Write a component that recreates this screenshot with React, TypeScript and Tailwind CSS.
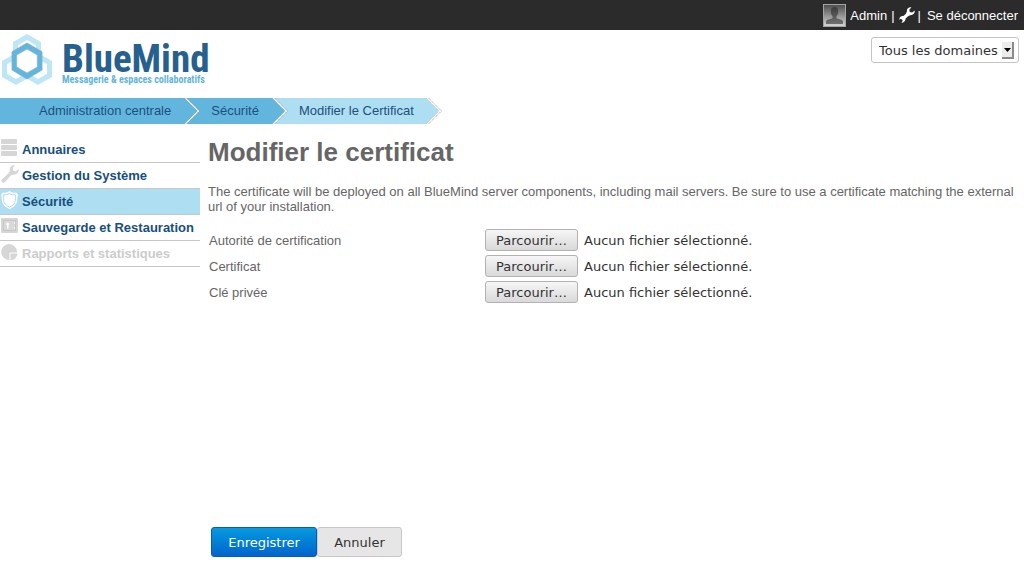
import { useRef, useState } from "react";
import type { ReactNode } from "react";

function LogoMark() {
  return (
    <svg width="52" height="53" viewBox="0 0 52 53" fill="none" aria-hidden="true">
      <g fill="#bfe6f7" fillRule="evenodd">
        <path d="M26 1 L40 9 V25 L26 33 L12 25 V9 Z M26 7 L17 12.200 V21.800 L26 27 L35 21.800 V12.200 Z" />
        <path d="M15 20 L29 28 V44 L15 52 L1 44 V28 Z M15 26 L6 31.200 V40.800 L15 46 L24 40.800 V31.200 Z" />
        <path d="M37 20 L51 28 V44 L37 52 L23 44 V28 Z M37 26 L28 31.200 V40.800 L37 46 L46 40.800 V31.200 Z" />
      </g>
      <path d="M26 10 L41 18.800 V37 L26 46 L11 37 V18.800 Z" fill="#62b6de" stroke="#7fb0c8" strokeWidth="0.800" />
      <path d="M26 16 L36.300 22 V34 L26 40 L15.700 34 V22 Z" fill="#fff" stroke="#8fb3c4" strokeWidth="0.700" />
    </svg>
  );
}

function Wrench({ size, color }: { size: number; color: string }) {
  return (
    <svg width={size} height={size} viewBox="0 0 18 18" fill={color} aria-hidden="true">
      <path d="M14 0.300 C11 -0.200 8.400 1.800 8.800 5.400 L7.500 7.800 L5 10.200 C3.500 10 1.500 10.600 0.700 12.400 L0.200 14.300 L2 13.300 L4 14.500 L3.800 16.300 L2.500 17.800 C5.300 18 7.600 15.800 7.400 13 L10.200 10.300 L12.500 9.200 C15.600 9.500 18 7.200 17.700 4 L14.800 6.300 L12.100 5.700 L11.600 3 Z" />
    </svg>
  );
}

function Avatar() {
  return (
    <svg width="23" height="23" viewBox="0 0 23 23" aria-hidden="true">
      <defs>
        <linearGradient id="avatarBg" x1="0" y1="0" x2="0" y2="1">
          <stop offset="0" stopColor="#4c4c4c" />
          <stop offset="1" stopColor="#d8d8d8" />
        </linearGradient>
        <linearGradient id="avatarFg" x1="0" y1="0" x2="0" y2="1">
          <stop offset="0" stopColor="#3c3c3c" />
          <stop offset="1" stopColor="#707070" />
        </linearGradient>
      </defs>
      <rect x="0.500" y="0.500" width="22" height="22" fill="url(#avatarBg)" stroke="#a5a5a5" />
      <path d="M11.500 3 C8.700 3 7.600 5 7.800 7.800 C8 10.200 8.900 11.800 9.600 12.500 V14 C8 15.500 3.500 15 3 17.500 V20 H20 V17.500 C19.500 15 15 15.500 13.400 14 V12.500 C14.100 11.800 15 10.200 15.200 7.800 C15.400 5 14.300 3 11.500 3 Z" fill="url(#avatarFg)" />
    </svg>
  );
}

const gray = "#d6d6d6";

const icons: Record<string, ReactNode> = {
  directory: (
    <svg width="18" height="18" viewBox="0 0 18 18" fill={gray} aria-hidden="true">
      <rect x="0" y="0" width="16" height="5" rx="1" />
      <rect x="0" y="6" width="16" height="5" rx="1" />
      <rect x="0" y="12" width="16" height="5" rx="1" />
    </svg>
  ),
  system: (
    <svg width="18" height="18" viewBox="0 0 18 18" fill={gray} aria-hidden="true">
      <path d="M14 0 C10.500 -0.300 8 2.500 9 6 L7.600 8.300 L0.900 14.500 C-0.500 16 1.500 18.800 3.600 17.200 L10.200 10.300 L12.500 9.600 C15.800 10 18.400 7 17.800 4 L15 6.300 L12.200 5.700 L11.700 3 Z" />
    </svg>
  ),
  security: (
    <svg width="18" height="18" viewBox="0 0 18 18" aria-hidden="true">
      <path d="M8.500 0 C6.500 1.700 4 2.200 1.500 1.500 L0 4 C1 6 0.500 8 1 11 C2 14.500 5 16.500 8.500 18 C12 16.500 15 14.500 16 11 C16.500 8 16 6 17 4 L15.500 1.500 C13 2.200 10.500 1.700 8.500 0 Z" fill="#fff" />
      <path d="M8.500 2.500 C6.500 3.800 4.500 4 2.700 3.700 C2.700 7 2.200 9 3.100 11.400 C4.200 13.800 6.200 15 8.500 16 C10.800 15 12.800 13.800 13.900 11.400 C14.800 9 14.300 7 14.300 3.700 C12.500 4 10.500 3.800 8.500 2.500 Z" fill="#fff" stroke="#aedef2" strokeWidth="1" />
    </svg>
  ),
  backup: (
    <svg width="18" height="18" viewBox="0 0 18 18" aria-hidden="true">
      <rect x="0" y="1" width="17" height="15" rx="1" fill={gray} />
      <rect x="2.500" y="3.500" width="12" height="10" fill="#d9d9d9" stroke="#c6c6c6" />
      <path d="M6.500 5.500 C4.800 5.500 4.800 8 6 8.300 V11.500 H7.500 V8.300 C8.500 8 8.200 5.500 6.500 5.500 Z" fill="#fff" />
      <path d="M13.500 5 V7 M13.500 10 V12" stroke="#f4f4f4" />
    </svg>
  ),
  reports: (
    <svg width="18" height="18" viewBox="0 0 18 18" fill={gray} aria-hidden="true">
      <path d="M8 1 A8 8 0 1 0 8.500 17 V9.500 H16 A8 8 0 0 0 8 1 Z" />
      <path d="M9.500 10.500 H16.500 A7 7 0 0 1 9.500 17 Z" />
    </svg>
  ),
};

const menu = [
  { icon: "directory", label: "Annuaires" },
  { icon: "system", label: "Gestion du Système" },
  { icon: "security", label: "Sécurité", active: true },
  { icon: "backup", label: "Sauvegarde et Restauration" },
  { icon: "reports", label: "Rapports et statistiques", disabled: true },
];

function Chevron({ left, right }: { left: string; right: string }) {
  return (
    <svg width="16" height="26" viewBox="0 0 16 26" className="shrink-0" aria-hidden="true">
      <rect width="16" height="26" fill={right} />
      <path d="M0 0 L13 13 L0 26 Z" fill={left} />
      <path d="M0.500 0 L13.500 13 L0.500 26" fill="none" stroke="#9b9389" strokeDasharray="1 1" />
      <path d="M1.500 0 L14.500 13 L1.500 26" fill="none" stroke="#fff" strokeWidth="1.200" />
      <path d="M2.500 0 L15.500 13 L2.500 26" fill="none" stroke="#9b9389" strokeDasharray="1 1" />
    </svg>
  );
}

function FileRow({ id, label }: { id: string; label: string }) {
  const input = useRef<HTMLInputElement>(null);
  const [name, setName] = useState("Aucun fichier sélectionné.");
  return (
    <div className="flex h-[26px] items-start">
      <label htmlFor={id} className="w-[277px] shrink-0 pt-1 pl-px">{label}</label>
      <button
        type="button"
        onClick={() => input.current?.click()}
        className="h-[22px] w-[93px] shrink-0 rounded-[3px] border border-[#b2b2b2] bg-linear-to-b from-[#f6f6f6] to-[#d9d9d9] pt-px font-['DejaVu_Sans',sans-serif] text-[13px] leading-[19px] text-[#333]"
      >
        Parcourir…
      </button>
      <span className="pt-1 pl-[6px] font-['DejaVu_Sans',sans-serif] text-[#333]">{name}</span>
      <input
        ref={input}
        id={id}
        type="file"
        className="sr-only"
        onChange={(e) => setName(e.target.files?.[0]?.name ?? "Aucun fichier sélectionné.")}
      />
    </div>
  );
}

export default function App() {
  return (
    <div className="flex min-h-screen flex-col bg-white font-['Liberation_Sans',Arial,sans-serif] text-[13px] leading-[15px] text-[#666]">
      <header>
        <div className="flex h-[30px] items-center justify-end bg-[#2b2b2b] pr-[6px] text-white">
          <Avatar />
          <a href="#admin" className="ml-1">Admin</a>
          <span className="mx-1">|</span>
          <a href="#parametres" aria-label="Paramètres"><Wrench size={16} color="#fff" /></a>
          <span className="mr-[6px] ml-[3px]">|</span>
          <a href="#deconnexion">Se déconnecter</a>
        </div>
        <div className="flex h-[68px] items-start justify-between pt-[3px] pr-[5px]">
          <a href="#accueil" className="flex items-start pl-px">
            <LogoMark />
            <span className="flex flex-col pt-[11px] pl-[9px]">
              <span className="font-['Liberation_Sans_Narrow','Roboto_Condensed','Open_Sans_Condensed','DejaVu_Sans_Condensed',sans-serif] text-[39px] leading-[30px] font-bold text-[#26608f]">BlueMind</span>
              <span className="font-['Liberation_Sans_Narrow','Roboto_Condensed','Open_Sans_Condensed',Roboto,sans-serif] text-[10px] leading-[12px] font-bold text-[#62b6de]">Messagerie &amp; espaces collaboratifs</span>
            </span>
          </a>
          <div className="relative mt-1">
            <select
              aria-label="Domaine"
              className="h-[26px] w-[148px] appearance-none rounded-[3px] border border-[#c4c4c4] bg-white pl-[7px] font-['DejaVu_Sans',sans-serif] text-[13px] text-[#333]"
            >
              <option>Tous les domaines</option>
            </select>
            <span className="pointer-events-none absolute top-[5px] right-[5px] flex h-[17px] w-[12px] items-center justify-center border-r-2 border-b-2 border-[#8a8a8a] bg-[#ececec]">
              <svg width="7" height="4" viewBox="0 0 7 4" aria-hidden="true"><path d="M0 0 H7 L3.500 4 Z" fill="#000" /></svg>
            </span>
          </div>
        </div>
        <nav aria-label="Fil d'Ariane" className="flex h-[26px] leading-[26px] text-[#1f4f7c]">
          <a href="#administration" className="bg-[#62b6de] pr-[13px] pl-[39px]">Administration centrale</a>
          <Chevron left="#62b6de" right="#62b6de" />
          <a href="#securite" className="bg-[#62b6de] pr-[13px] pl-[11px]">Sécurité</a>
          <Chevron left="#62b6de" right="#aedef2" />
          <a href="#certificat" className="bg-[#aedef2] pr-3 pl-[11px]">Modifier le Certificat</a>
          <Chevron left="#aedef2" right="#fff" />
        </nav>
      </header>
      <div className="flex grow">
        <aside className="w-[200px] shrink-0 pt-[13px]">
          <ul>
            {menu.map((item) => (
              <li key={item.label} className={item.active ? "border-b border-[#c8c8c8] bg-[#aedef2]" : "border-b border-[#c8c8c8]"}>
                <a
                  href={"#" + item.icon}
                  className={
                    item.disabled
                      ? "flex h-[25px] gap-[3px] pt-[2px] pl-px font-bold whitespace-nowrap text-[#ccc]"
                      : "flex h-[25px] gap-[3px] pt-[2px] pl-px font-bold whitespace-nowrap text-[#174f7d]"
                  }
                >
                  <span className="shrink-0">{icons[item.icon]}</span>
                  <span className="pt-[3px]">{item.label}</span>
                </a>
              </li>
            ))}
          </ul>
        </aside>
        <main className="flex min-w-0 grow flex-col pt-3 pr-2 pb-[19px] pl-2">
          <h1 className="text-[26px] leading-8 font-bold">Modifier le certificat</h1>
          <p className="mt-4">
            The certificate will be deployed on all BlueMind server components, including mail servers. Be sure to use a certificate matching the external url of your installation.
          </p>
          <form className="mt-[15px] flex grow flex-col" onSubmit={(e) => e.preventDefault()}>
            <FileRow id="autorite" label="Autorité de certification" />
            <FileRow id="fichier-certificat" label="Certificat" />
            <FileRow id="cle" label="Clé privée" />
            <div className="mt-auto flex pl-[3px] font-['DejaVu_Sans',sans-serif]">
              <button type="submit" className="h-[30px] w-[106px] rounded-[3px] border border-[#0b5cad] bg-linear-to-b from-[#0a9adf] to-[#0564cd] text-white">Enregistrer</button>
              <button type="button" className="h-[30px] w-[85px] rounded-[3px] border border-[#c8c8c8] bg-[#e6e6e6] text-[#333]">Annuler</button>
            </div>
          </form>
        </main>
      </div>
    </div>
  );
}
